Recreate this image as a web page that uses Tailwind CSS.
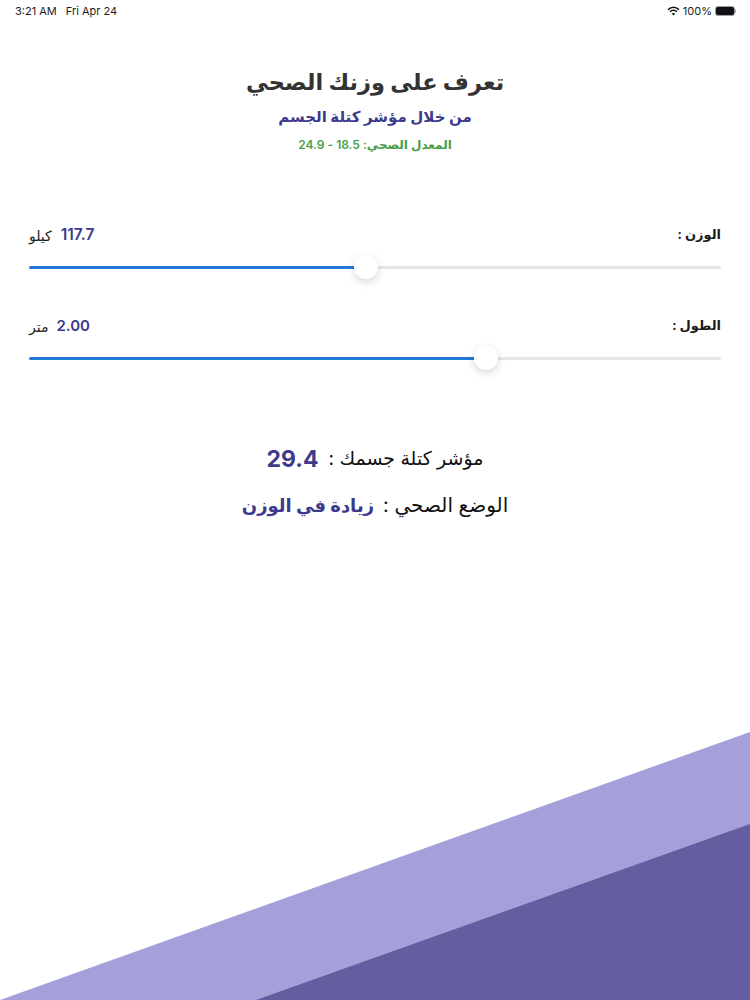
<!DOCTYPE html>
<html lang="ar" dir="rtl">
  <head>
    <meta charset="UTF-8" />
    <meta name="viewport" content="width=device-width, initial-scale=1.0" />
    <title>BMI</title>
    <script src="https://cdn.jsdelivr.net/npm/@tailwindcss/browser@4"></script>
  </head>
  <body class="bg-white font-['Inter','DejaVu_Sans',sans-serif]">
    <div class="relative h-[1000px] w-[750px] overflow-hidden bg-white">
      <!-- Status bar -->
      <div dir="ltr" class="flex h-[22px] items-center justify-between pl-[15px] pr-[14px] text-[11px] text-[#1c1c1e]">
        <div class="flex gap-[9px]">
          <span>3:21 AM</span>
          <span>Fri Apr 24</span>
        </div>
        <div class="flex items-center gap-[3px]">
          <svg width="13" height="10" viewBox="0 0 13 10" fill="none" stroke="#111" stroke-width="1.5">
            <path d="M1 3.6C4.4 .6 8.6 .6 12 3.6" />
            <path d="M3 5.7C5.2 3.9 7.8 3.9 10 5.7" />
            <path d="M6.5 9.6L4.7 7.6C5.8 6.8 7.2 6.8 8.3 7.6Z" fill="#111" stroke="none" />
          </svg>
          <span>100%</span>
          <div class="flex items-center">
            <div class="h-[10px] w-[20px] rounded-[3px] border border-gray-400 bg-[#111] p-px"></div>
            <div class="h-[4px] w-px rounded-r-sm bg-gray-400"></div>
          </div>
        </div>
      </div>

      <!-- Header -->
      <div class="mt-[43px] flex flex-col items-center">
        <h1 class="text-[22.5px] leading-[34px] font-bold text-[#333333]">تعرف على وزنك الصحي</h1>
        <h2 class="mt-[6px] text-[15px] leading-[24px] font-bold text-[#3d3a8c]">من خلال مؤشر كتلة الجسم</h2>
        <p class="mt-[7px] text-[12px] leading-[18px] font-semibold text-[#4a9e4a]">المعدل الصحي: 18.5 - 24.9</p>
      </div>

      <!-- Sliders -->
      <div class="mt-[69px] px-[29px]">
        <div class="flex h-[24px] items-center justify-between">
          <span class="text-[13px] font-bold text-[#1c1c1e]">الوزن :</span>
          <div class="flex items-center gap-[9px]">
            <span class="text-[15.5px] font-semibold text-[#3d3a8c]">117.7</span>
            <span class="text-[14px] text-[#222]">كيلو</span>
          </div>
        </div>
        <div dir="ltr" class="relative mt-[19px] flex h-[3px]">
          <div class="w-[326px] rounded-l-full bg-[#2079d4]"></div>
          <div class="flex-1 rounded-r-full bg-[#e6e6e6]"></div>
          <div class="absolute top-[-11px] left-[325px] h-[24px] w-[24px] rounded-full bg-white shadow-[0_3px_8px_rgba(0,0,0,0.16)]"></div>
        </div>

        <div class="mt-[45px] flex h-[24px] items-center justify-between">
          <span class="text-[13px] font-bold text-[#1c1c1e]">الطول :</span>
          <div class="flex items-center gap-[8px]">
            <span class="text-[15px] font-semibold text-[#3d3a8c]">2.00</span>
            <span class="text-[14px] text-[#222]">متر</span>
          </div>
        </div>
        <div dir="ltr" class="relative mt-[19px] flex h-[3px]">
          <div class="w-[446px] rounded-l-full bg-[#2079d4]"></div>
          <div class="flex-1 rounded-r-full bg-[#e6e6e6]"></div>
          <div class="absolute top-[-11px] left-[445px] h-[24px] w-[24px] rounded-full bg-white shadow-[0_3px_8px_rgba(0,0,0,0.16)]"></div>
        </div>
      </div>

      <!-- Result -->
      <div class="mt-[84px] flex flex-col items-center gap-[16px]">
        <div class="flex h-[30px] items-center gap-[10px]">
          <span class="text-[19px] text-[#111]">مؤشر كتلة جسمك :</span>
          <span class="text-[23px] font-bold text-[#3d3a8c]">29.4</span>
        </div>
        <div class="flex h-[30px] items-center gap-[9px]">
          <span class="text-[20px] text-[#111]">الوضع الصحي :</span>
          <span class="text-[18px] font-bold text-[#3d3a8c]">زيادة في الوزن</span>
        </div>
      </div>

      <!-- Bottom shapes -->
      <svg class="absolute bottom-0 left-0" width="750" height="268" viewBox="0 0 750 268">
        <polygon points="0,268 750,0 750,268" fill="#a3a0da" />
        <polygon points="256,268 750,92 750,268" fill="#635e9f" />
      </svg>
    </div>
  </body>
</html>
